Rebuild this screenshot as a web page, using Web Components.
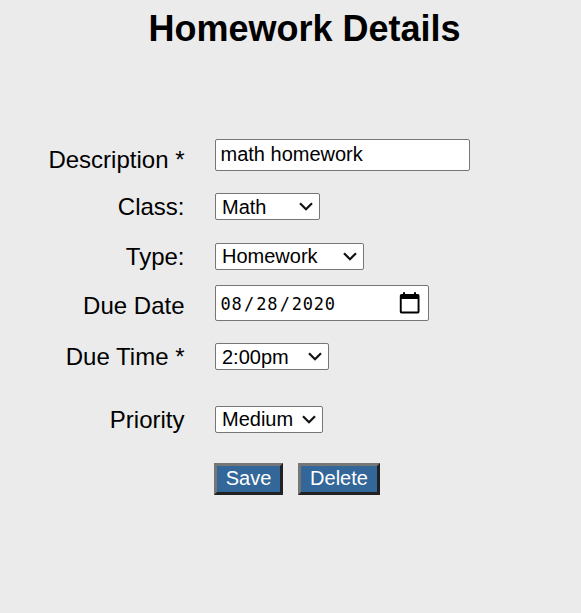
<!DOCTYPE html>
<html lang="en"><head><meta charset="utf-8"><title>Homework Details</title>
<style>html,body{margin:0;background:#ebebeb}body{font-family:"Liberation Sans",Arial,sans-serif;color:#000}</style></head>
<body><homework-page></homework-page>
<script>
const define=(name,html)=>{
  const t=document.createElement('template');t.innerHTML=html;
  customElements.define(name,class extends HTMLElement{
    constructor(){super();this.attachShadow({mode:'open'}).append(t.content.cloneNode(true));}
  });
};
const box=`box-sizing:border-box;background:#fff;border:1px solid #767676;border-radius:2px;font-size:20px;white-space:pre;`;
define('form-row',`<style>
:host{display:flex;align-items:flex-start;height:var(--h,27px);margin-bottom:var(--gap,0)}
.label{box-sizing:border-box;width:184.5px;margin-right:30.5px;padding-top:var(--drop,0);text-align:right;font-size:24px;line-height:28px;white-space:pre;flex:none}
</style><div class="label"><slot name="label"></slot></div><slot></slot>`);
define('text-field',`<style>:host{display:block;${box}width:255px;height:32px;padding:0 4.5px;line-height:29px}</style><slot></slot>`);
define('select-field',`<style>:host{display:flex;align-items:center;justify-content:space-between;${box}width:var(--w);height:27px;padding:0 6px;line-height:25px}span{padding-top:var(--shift,0)}svg{flex:none;display:block}</style>
<span><slot></slot></span><svg width="14" height="9" viewBox="0 0 14 9"><path d="M1 1.2 7 7.2 13 1.2" fill="none" stroke="#111" stroke-width="2.2"/></svg>`);
define('date-field',`<style>:host{display:flex;align-items:center;justify-content:space-between;${box}width:214px;height:36px;padding:0 8px 0 3.5px}
.d{display:flex;font:17px/34px "DejaVu Sans Mono",monospace;letter-spacing:.77px;padding-top:2px}.d ::slotted(span){padding:0 1.6px 0 1px}svg{display:block}</style>
<div class="d"><slot></slot></div><svg width="21" height="22" viewBox="0 0 21 22"><path d="M2.5 2H18.8Q20.5 2 20.5 3.7V19.8Q20.5 21.4 18.9 21.4H2.4Q.8 21.4 .8 19.8V3.7Q.8 2 2.5 2ZM2.7 7V19.4H18.6V7Z" fill-rule="evenodd"/><path d="M4 .3H6V3H4ZM15 .3H17V3H15Z"/></svg>`);
define('action-button',`<style>:host{display:block;box-sizing:border-box;width:var(--w);height:32px;border:3px solid;border-color:#767676 #212121 #212121 #767676;background:#336699;color:#fff;font-size:20px;line-height:25px;text-align:center}</style><slot></slot>`);
define('homework-page',`<style>
:host{display:block;height:613px;box-sizing:border-box;padding-top:9px;overflow:hidden}
h1{margin:0 0 90px 28px;font-size:36px;line-height:40px;text-align:center}
.actions{display:flex;gap:15px;padding-left:214px}
</style><h1>Homework Details</h1>
<form-row style="--h:32px;--gap:22px;--drop:7px"><span slot="label">Description *</span><text-field>math homework</text-field></form-row>
<form-row style="--gap:23px"><span slot="label">Class:</span><select-field style="--w:105px;--shift:2px">Math</select-field></form-row>
<form-row style="--gap:15px"><span slot="label">Type:</span><select-field style="--w:149px">Homework</select-field></form-row>
<form-row style="--h:36px;--gap:22px;--drop:7px"><span slot="label">Due Date</span><date-field><span>08</span>/<span>28</span>/<span>2020</span></date-field></form-row>
<form-row style="--gap:36px"><span slot="label">Due Time *</span><select-field style="--w:114px;--shift:2px">2:00pm</select-field></form-row>
<form-row style="--gap:30px"><span slot="label">Priority</span><select-field style="--w:108px">Medium</select-field></form-row>
<div class="actions"><action-button style="--w:69px">Save</action-button><action-button style="--w:82px">Delete</action-button></div>`);
</script></body></html>
